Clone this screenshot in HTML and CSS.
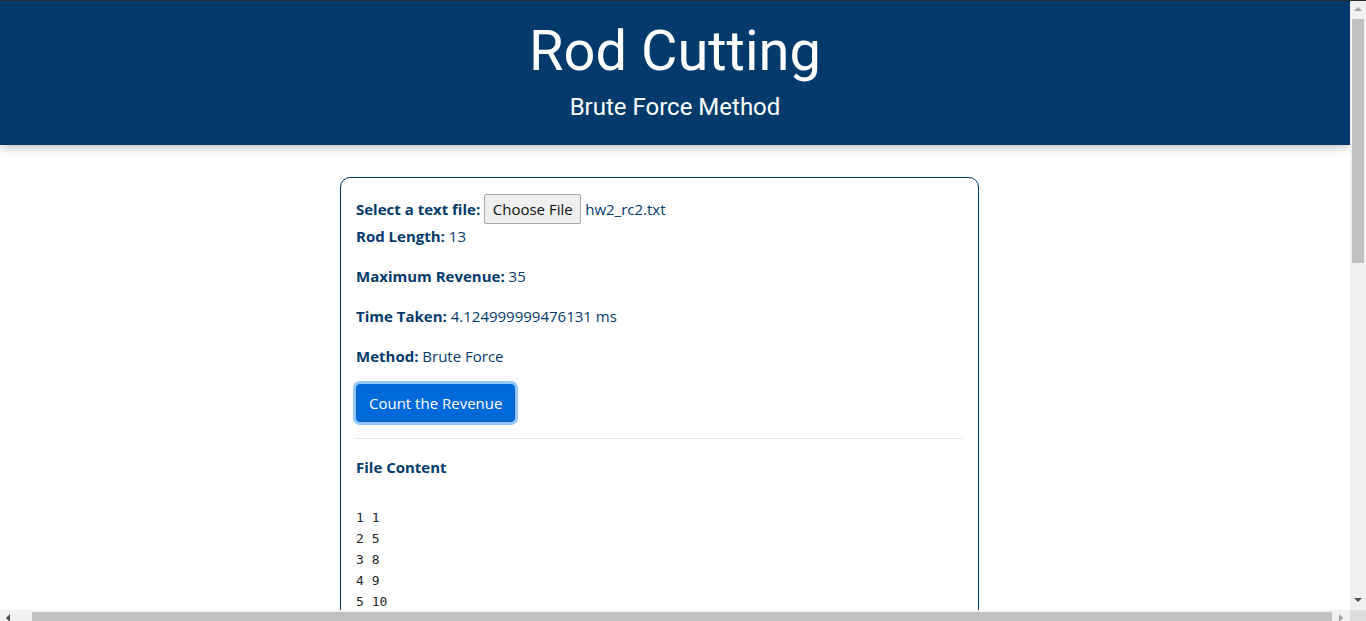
FILE: index.html
```html
<!DOCTYPE html>
<html lang="en">
<head>
<meta charset="utf-8">
<title>Rod Cutting</title>
<link rel="stylesheet" href="styles.css">
</head>
<body>
<div class="page">
  <header class="hero">
    <h1 class="hero-title">Rod Cutting</h1>
    <p class="hero-sub">Brute Force Method</p>
  </header>
  <main class="card">
    <div class="file-row">
      <span class="label">Select a text file:</span>
      <span class="file-btn">Choose File</span>
      <span class="file-name">hw2_rc2.txt</span>
    </div>
    <p class="stat stat-first"><span class="label">Rod Length:</span> 13</p>
    <p class="stat"><span class="label">Maximum Revenue:</span> 35</p>
    <p class="stat"><span class="label">Time Taken:</span> 4.124999999476131 ms</p>
    <p class="stat"><span class="label">Method:</span> Brute Force</p>
    <button class="btn-primary" type="button">Count the Revenue</button>
    <hr class="divider">
    <p class="content-title">File Content</p>
    <pre class="file-content">1 1
2 5
3 8
4 9
5 10</pre>
  </main>
</div>
<div class="topline"></div>
<div class="vscroll">
  <span class="arrow arrow-up"></span>
  <span class="vthumb"></span>
  <span class="arrow arrow-down"></span>
</div>
<div class="hscroll">
  <span class="arrow arrow-left"></span>
  <span class="hthumb"></span>
  <span class="arrow arrow-right"></span>
</div>
<div class="corner"></div>
</body>
</html>
```
FILE: styles.css
```css
html {
  overflow: hidden;
}
body {
  margin: 0;
  background: #ffffff;
  font-family: "Open Sans", "Noto Sans", sans-serif;
  font-size: 15px;
  line-height: 24px;
  color: #033a6c;
}
.page {
  width: 1350px;
  min-height: 1400px;
}
.hero {
  background: #033a6c;
  color: #ffffff;
  text-align: center;
  padding: 18px 0 23px;
  box-shadow: 0 3px 9px rgba(0, 0, 0, 0.22);
  position: relative;
}
.hero-title {
  margin: 0;
  font-family: Roboto, sans-serif;
  font-weight: 400;
  font-size: 56px;
  line-height: 67px;
}
.hero-sub {
  margin: 8px 0 0;
  font-family: Roboto, sans-serif;
  font-weight: 400;
  font-size: 24px;
  line-height: 29px;
}
.card {
  display: block;
  box-sizing: border-box;
  width: 639px;
  margin: 32px 0 0 340px;
  border: 1px solid #033a6c;
  border-radius: 10px;
  padding: 15px;
  min-height: 900px;
}
.file-row {
  display: flex;
  align-items: center;
  height: 31px;
  white-space: nowrap;
}
.label {
  font-weight: 700;
}
.file-btn {
  box-sizing: border-box;
  margin-left: 4px;
  height: 30px;
  width: 97px;
  display: inline-flex;
  align-items: center;
  justify-content: center;
  border: 1px solid #a9a9a9;
  border-radius: 2px;
  background: #efefef;
  color: #111111;
  white-space: nowrap;
}
.file-name {
  margin-left: 4px;
}
.stat {
  margin: 0 0 16px;
}
.btn-primary {
  display: block;
  box-sizing: border-box;
  height: 38px;
  padding: 0 12px;
  font-family: "Open Sans", "Noto Sans", sans-serif;
  font-size: 15px;
  line-height: 24px;
  color: #ffffff;
  background: #0069d9;
  border: 1px solid #0062cc;
  border-radius: 4px;
  box-shadow: 0 0 0 3px rgba(38, 143, 255, 0.5);
}
.divider {
  margin: 16px 0;
  border: 0;
  border-top: 1px solid rgba(0, 0, 0, 0.1);
}
.content-title {
  margin: 0 0 28px;
  font-weight: 700;
}
.file-content {
  margin: 0;
  font-family: "DejaVu Sans Mono", "Liberation Mono", monospace;
  font-size: 13px;
  line-height: 21px;
  color: #212529;
}
.topline {
  position: fixed;
  left: 0;
  top: 0;
  width: 1366px;
  height: 1px;
  background: #2b2b2b;
}
.vscroll {
  position: fixed;
  right: 0;
  top: 1px;
  width: 16px;
  height: 609px;
  background: #f1f1f1;
}
.vthumb {
  position: absolute;
  left: 2px;
  top: 18px;
  width: 12px;
  height: 244px;
  background: #c1c1c1;
}
.hscroll {
  position: fixed;
  left: 0;
  top: 610px;
  width: 1350px;
  height: 11px;
  background: #f1f1f1;
}
.hthumb {
  position: absolute;
  left: 32px;
  top: 2px;
  width: 1300px;
  height: 9px;
  background: #c1c1c1;
}
.corner {
  position: fixed;
  right: 0;
  top: 610px;
  width: 16px;
  height: 11px;
  background: #dcdcdc;
}
.arrow {
  position: absolute;
  width: 0;
  height: 0;
  border-style: solid;
}
.arrow-up {
  left: 4px;
  top: 6px;
  border-width: 0 4px 4px 4px;
  border-color: transparent transparent #a3a3a3 transparent;
}
.arrow-down {
  left: 4px;
  top: 597px;
  border-width: 4px 4px 0 4px;
  border-color: #505050 transparent transparent transparent;
}
.arrow-left {
  left: 6px;
  top: 4px;
  border-width: 4px 4px 4px 0;
  border-color: transparent #505050 transparent transparent;
}
.arrow-right {
  left: 1339px;
  top: 4px;
  border-width: 4px 0 4px 4px;
  border-color: transparent transparent transparent #a3a3a3;
}
```
